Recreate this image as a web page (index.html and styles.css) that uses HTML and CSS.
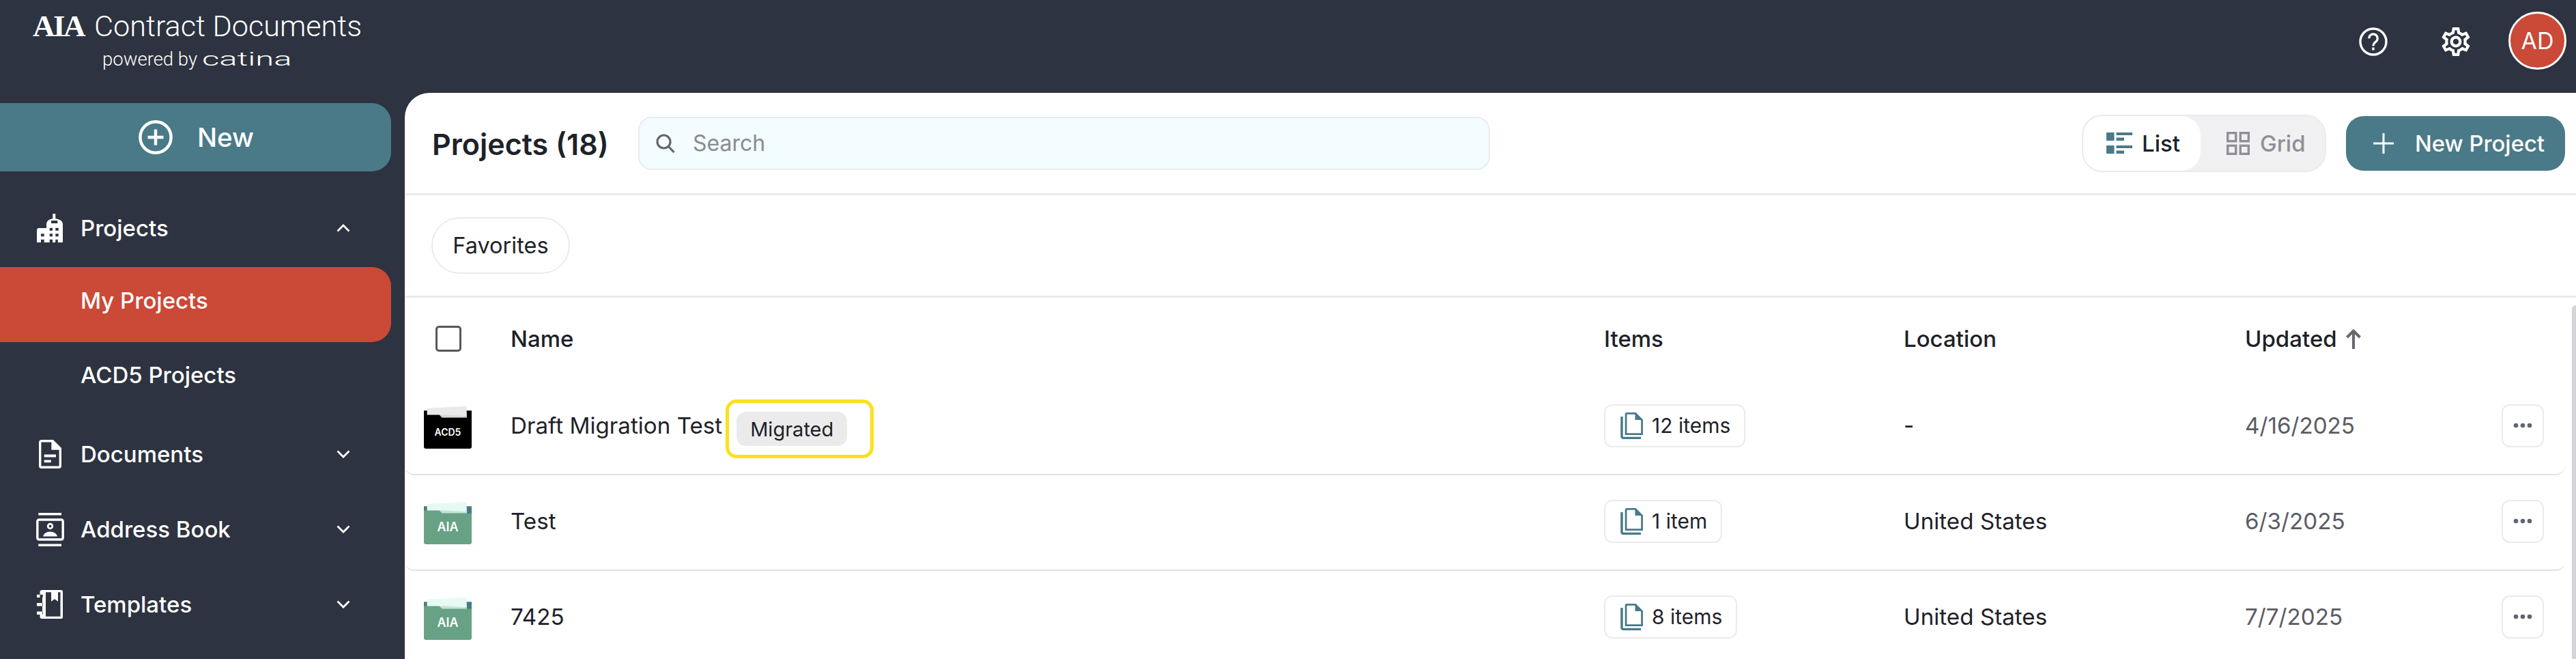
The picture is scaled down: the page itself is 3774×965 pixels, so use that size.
FILE: index.html
```html
<!DOCTYPE html>
<html lang="en">
<head>
<meta charset="utf-8">
<title>Projects</title>
<link rel="stylesheet" href="styles.css">
</head>
<body>
<div class="app">
  <header class="topbar">
    <div class="logo">
      <div class="logo-main"><span class="logo-aia">AIA</span><span class="logo-name">Contract Documents</span></div>
      <div class="logo-sub"><span class="logo-powered">powered by</span><span class="logo-catina">catina</span></div>
    </div>
    <div class="top-actions">
      <svg class="ico-help" viewBox="0 0 42 42" fill="none" stroke="#fff" stroke-width="3.4"><circle cx="21" cy="21" r="19"/><path d="M14.8 16.2a6.2 6.2 0 1 1 10 4.8c-2.6 2-3.8 3.2-3.8 6.2" stroke-width="3.2"/><path d="M21 29.5v4" stroke-width="3.4"/></svg>
      <svg class="ico-gear" viewBox="2 2 20 20" fill="#fff"><path d="M19.43 12.98c.04-.32.07-.64.07-.98 0-.34-.03-.66-.07-.98l2.11-1.65c.19-.15.24-.42.12-.64l-2-3.46c-.09-.16-.26-.25-.44-.25-.06 0-.12.01-.17.03l-2.49 1c-.52-.4-1.08-.73-1.69-.98l-.38-2.65C14.46 2.18 14.25 2 14 2h-4c-.25 0-.46.18-.49.42l-.38 2.65c-.61.25-1.17.59-1.69.98l-2.49-1c-.06-.02-.12-.03-.18-.03-.17 0-.34.09-.43.25l-2 3.46c-.13.22-.07.49.12.64l2.11 1.65c-.04.32-.07.65-.07.98 0 .33.03.66.07.98l-2.11 1.65c-.19.15-.24.42-.12.64l2 3.46c.09.16.26.25.44.25.06 0 .12-.01.17-.03l2.49-1c.52.4 1.08.73 1.69.98l.38 2.65c.03.24.24.42.49.42h4c.25 0 .46-.18.49-.42l.38-2.65c.61-.25 1.17-.59 1.69-.98l2.49 1c.06.02.12.03.18.03.17 0 .34-.09.43-.25l2-3.46c.12-.22.07-.49-.12-.64l-2.11-1.65zm-1.98-1.71c.04.31.05.52.05.73 0 .21-.02.43-.05.73l-.14 1.13.89.7 1.08.84-.7 1.21-1.27-.51-1.04-.42-.9.68c-.43.32-.84.56-1.25.73l-1.06.43-.16 1.13-.2 1.35h-1.4l-.19-1.35-.16-1.13-1.06-.43c-.43-.18-.83-.41-1.23-.71l-.91-.7-1.06.43-1.27.51-.7-1.21 1.08-.84.89-.7-.14-1.13c-.03-.31-.05-.54-.05-.74s.02-.43.05-.73l.14-1.13-.89-.7-1.08-.84.7-1.21 1.27.51 1.04.42.9-.68c.43-.32.84-.56 1.25-.73l1.06-.43.16-1.13.2-1.35h1.39l.19 1.35.16 1.13 1.06.43c.43.18.83.41 1.23.71l.91.7 1.06-.43 1.27-.51.7 1.21-1.07.85-.89.7.14 1.13zM12 8c-2.21 0-4 1.79-4 4s1.79 4 4 4 4-1.79 4-4-1.79-4-4-4zm0 6c-1.1 0-2-.9-2-2s.9-2 2-2 2 .9 2 2-.9 2-2 2z"/></svg>
      <div class="avatar">AD</div>
    </div>
  </header>
  <div class="body">
    <aside class="sidebar">
      <button class="new-btn">
        <svg class="ico-newplus" viewBox="0 0 50 50" fill="none" stroke="#fff" stroke-width="4.4"><ellipse cx="25" cy="25" rx="22.6" ry="22.8"/><path d="M13.5 25h23M25 13.5v23"/></svg>
        <span>New</span>
      </button>
      <nav class="nav">
        <div class="nav-item">
          <span class="nav-ico"><svg width="38" height="42" viewBox="0 0 38 42" fill="#fff"><path fill-rule="evenodd" d="M0 24q0-3 3-3h11v-6q0-6 9.300-8V0h4v7q10.700 2 10.700 8v27H30.800v-4.300h-3.600V42H23v-4.300h-4.300V42H10.700v-4.300H6V42H0zM21 10v4h9.300v-4zM18.700 20.700v4H23v-4zM27.300 20.700v4h4.400v-4zM18.700 29.300v4H23v-4zM27.300 29.300v4h4.400v-4zM6 29.300v4h4.700v-4z"/></svg></span>
          <span class="nav-label">Projects</span>
          <svg class="chev" viewBox="0 0 20 12" fill="none" stroke="#fff" stroke-width="2.8"><path d="M1.500 10.500 10 2l8.500 8.500"/></svg>
        </div>
        <div class="nav-item nav-active"><span class="nav-ico"></span><span class="nav-label">My Projects</span></div>
        <div class="nav-item nav-sub"><span class="nav-ico"></span><span class="nav-label">ACD5 Projects</span></div>
        <div class="nav-item nav-gap">
          <span class="nav-ico"><svg width="33" height="42" viewBox="0 0 33 42" fill="none" stroke="#fff" stroke-width="3.4"><path d="M3.700 1.700H20L31.300 13v25.300a2 2 0 0 1-2 2H3.700a2 2 0 0 1-2-2V3.700a2 2 0 0 1 2-2z" stroke-linejoin="round"/><path d="M20 1.700 31.300 13H20z" fill="#fff"/><path d="M7.700 23.500H25M7.700 31.300h10" stroke-width="3.800"/></svg></span>
          <span class="nav-label">Documents</span>
          <svg class="chev" viewBox="0 0 20 12" fill="none" stroke="#fff" stroke-width="2.8"><path d="M1.500 1.500 10 10l8.500-8.500"/></svg>
        </div>
        <div class="nav-item">
          <span class="nav-ico"><svg width="41" height="49" viewBox="0 0 41 49" fill="none" stroke="#fff" stroke-width="3.500"><path d="M3.300 1.800H37M3.300 47.200H37"/><rect x="1.800" y="10" width="37.400" height="29" rx="2.500"/><circle cx="20.500" cy="19.500" r="3.300" stroke-width="2.800"/><path d="M10 34.500c1-4 5-7 10.500-7s9.500 3 10.500 7z" fill="#fff" stroke="none"/></svg></span>
          <span class="nav-label">Address Book</span>
          <svg class="chev" viewBox="0 0 20 12" fill="none" stroke="#fff" stroke-width="2.8"><path d="M1.500 1.500 10 10l8.500-8.500"/></svg>
        </div>
        <div class="nav-item">
          <span class="nav-ico"><svg width="38" height="42" viewBox="0 0 38 42" fill="#fff"><path fill-rule="evenodd" d="M7.500 0H35.500a2.500 2.500 0 0 1 2.500 2.500V39.500a2.500 2.500 0 0 1-2.500 2.500H7.500a3 3 0 0 1-3-3V36H0V31.500h8.700v4.200H8V38.700H34.500V3.200H13V38.700H8V23.500H0V19H8.700V23.500H8V11H0V6.700H8.700V11H4.500V3a3 3 0 0 1 3-3z"/><path d="M21 3h10v13.700l-5-3.400-5 3.400z"/></svg></span>
          <span class="nav-label">Templates</span>
          <svg class="chev" viewBox="0 0 20 12" fill="none" stroke="#fff" stroke-width="2.8"><path d="M1.500 1.500 10 10l8.500-8.500"/></svg>
        </div>
      </nav>
    </aside>
    <main class="main">
      <div class="head">
        <h1 class="title">Projects (18)</h1>
        <div class="search">
          <svg class="ico-search" viewBox="0 0 28 28" fill="none" stroke="#65666d" stroke-width="3.200"><circle cx="11.500" cy="11.500" r="9.500"/><path d="m18.500 18.500 8 8.500"/></svg>
          <span>Search</span>
        </div>
        <div class="toggle">
          <div class="tg tg-on">
            <svg width="38" height="31" viewBox="0 0 38 31" fill="#4a7a88"><path d="M0 0h11.500v12H0zM0 19h11.500v12H0zM14.500 0H38v4H14.500zM14.500 7.500H26v4.500H14.500zM14.500 19H38v4H14.500zM14.500 26.500H26V31H14.500z"/></svg>
            <span>List</span>
          </div>
          <div class="tg tg-off">
            <svg width="34" height="34" viewBox="0 0 34 34" fill="none" stroke="#8f8f97" stroke-width="3.400"><rect x="1.700" y="1.700" width="12" height="12"/><rect x="20.300" y="1.700" width="12" height="12"/><rect x="1.700" y="20.300" width="12" height="12"/><rect x="20.300" y="20.300" width="12" height="12"/></svg>
            <span>Grid</span>
          </div>
        </div>
        <button class="new-project">
          <svg width="30" height="30" viewBox="0 0 30 30" fill="none" stroke="#fff" stroke-width="3"><path d="M0 15h30M15 0v30"/></svg>
          <span>New Project</span>
        </button>
      </div>
      <div class="filters"><div class="chip-fav">Favorites</div></div>
      <div class="table">
        <div class="row row-head">
          <div class="cell-ico"><span class="checkbox"></span></div>
          <div>Name</div>
          <div>Items</div>
          <div>Location</div>
          <div class="updated">Updated
            <svg width="24" height="29" viewBox="0 0 24 29" fill="none" stroke="#66686e" stroke-width="4"><path d="M12 3v26M2.500 12 12 2.500l9.500 9.500"/></svg>
          </div>
          <div></div>
        </div>
        <div class="row">
          <div class="cell-ico">
            <svg class="folder" viewBox="0 0 70 62"><path fill="#000" d="M0 6.300h70V20H0z"/><path fill="#e9e9e9" d="M4.700 2.700 62.300 0 63 14.500H4.700z"/><path fill="#d9d9d9" d="M24 12l39 2.300v2.400H26z"/><path fill="#000" d="M0 12.500h23l3 4.200h44V59a3 3 0 0 1-3 3H3a3 3 0 0 1-3-3z"/><text class="folder-acd" x="35" y="43.300">ACD5</text></svg>
          </div>
          <div class="cell-name">
            <span>Draft Migration Test</span>
            <span class="mark"><span class="badge">Migrated</span></span>
          </div>
          <div><span class="items"><svg class="ico-doc" viewBox="0 0 33 39" fill="none" stroke="#4a7a88" stroke-width="2.800"><path d="M2 6v29a2.500 2.500 0 0 0 2.500 2.500H30" stroke-width="3.500"/><path d="M9.500 1.400H22L31.600 11v20.600H8.100V2.800a1.400 1.400 0 0 1 1.400-1.400z"/><path d="M21.500 1.400 31.600 11H21.500z" fill="#4a7a88" stroke="none"/></svg>12 items</span></div>
          <div>-</div>
          <div class="date">4/16/2025</div>
          <div class="more"><svg width="28" height="8" viewBox="0 0 28 8" fill="#5f6470"><circle cx="4" cy="4" r="3.300"/><circle cx="14" cy="4" r="3.300"/><circle cx="24" cy="4" r="3.300"/></svg></div>
        </div>
        <div class="row">
          <div class="cell-ico">
            <svg class="folder" viewBox="0 0 70 62"><path fill="#4a7a88" d="M0 6.300h70V20H0z"/><path fill="#e6faf4" d="M4.700 2.700 62.300 0 63 14.500H4.700z"/><path fill="#c5e3d6" d="M24 12l39 2.300v2.400H26z"/><path fill="#67a285" d="M0 12.500h23l3 4.200h44V59a3 3 0 0 1-3 3H3a3 3 0 0 1-3-3z"/><text class="folder-aia" x="35" y="43.300">AIA</text></svg>
          </div>
          <div class="cell-name"><span>Test</span></div>
          <div><span class="items"><svg class="ico-doc" viewBox="0 0 33 39" fill="none" stroke="#4a7a88" stroke-width="2.800"><path d="M2 6v29a2.500 2.500 0 0 0 2.500 2.500H30" stroke-width="3.500"/><path d="M9.500 1.400H22L31.600 11v20.600H8.100V2.800a1.400 1.400 0 0 1 1.400-1.400z"/><path d="M21.500 1.400 31.600 11H21.500z" fill="#4a7a88" stroke="none"/></svg>1 item</span></div>
          <div>United States</div>
          <div class="date">6/3/2025</div>
          <div class="more"><svg width="28" height="8" viewBox="0 0 28 8" fill="#5f6470"><circle cx="4" cy="4" r="3.300"/><circle cx="14" cy="4" r="3.300"/><circle cx="24" cy="4" r="3.300"/></svg></div>
        </div>
        <div class="row">
          <div class="cell-ico">
            <svg class="folder" viewBox="0 0 70 62"><path fill="#4a7a88" d="M0 6.300h70V20H0z"/><path fill="#e6faf4" d="M4.700 2.700 62.300 0 63 14.500H4.700z"/><path fill="#c5e3d6" d="M24 12l39 2.300v2.400H26z"/><path fill="#67a285" d="M0 12.500h23l3 4.200h44V59a3 3 0 0 1-3 3H3a3 3 0 0 1-3-3z"/><text class="folder-aia" x="35" y="43.300">AIA</text></svg>
          </div>
          <div class="cell-name"><span>7425</span></div>
          <div><span class="items"><svg class="ico-doc" viewBox="0 0 33 39" fill="none" stroke="#4a7a88" stroke-width="2.800"><path d="M2 6v29a2.500 2.500 0 0 0 2.500 2.500H30" stroke-width="3.500"/><path d="M9.500 1.400H22L31.600 11v20.600H8.100V2.800a1.400 1.400 0 0 1 1.400-1.400z"/><path d="M21.500 1.400 31.600 11H21.500z" fill="#4a7a88" stroke="none"/></svg>8 items</span></div>
          <div>United States</div>
          <div class="date">7/7/2025</div>
          <div class="more"><svg width="28" height="8" viewBox="0 0 28 8" fill="#5f6470"><circle cx="4" cy="4" r="3.300"/><circle cx="14" cy="4" r="3.300"/><circle cx="24" cy="4" r="3.300"/></svg></div>
        </div>
      </div>
      <div class="scrollbar"></div>
    </main>
  </div>
</div>
</body>
</html>
```

FILE: styles.css
```css
* { box-sizing: border-box; }
html, body { margin: 0; height: 100%; }
body {
  background: #2d3340;
  font-family: Inter, "Liberation Sans", sans-serif;
  color: #1e2228;
  overflow: hidden;
}
.app { width: 3774px; height: 965px; display: flex; flex-direction: column; overflow: hidden; }

/* top bar */
.topbar { height: 136px; flex: none; display: flex; align-items: flex-start; justify-content: space-between; color: #fff; }
.logo { padding: 12px 0 0 48px; display: flex; flex-direction: column; }
.logo-main { display: flex; align-items: baseline; height: 52px; }
.logo-aia { font-family: "Liberation Serif", serif; font-weight: 700; font-size: 45px; line-height: 52px; letter-spacing: -2.500px; width: 90px; }
.logo-name { font-family: Roboto, sans-serif; font-weight: 300; font-size: 43.200px; line-height: 52px; }
.logo-sub { display: flex; align-items: baseline; padding-left: 102px; height: 40px; margin-top: 3px; }
.logo-powered { font-family: Roboto, sans-serif; font-weight: 300; font-size: 27.500px; line-height: 40px; width: 146px; }
.logo-catina { font-family: Roboto, sans-serif; font-weight: 300; font-size: 28px; line-height: 40px; display: inline-block; transform: scaleX(1.75); transform-origin: left center; }
.top-actions { display: flex; align-items: center; padding: 18px 14px 0 0; height: 103px; }
.ico-help { width: 42px; height: 42px; margin-right: 79px; }
.ico-gear { width: 42px; height: 42px; margin-right: 56px; }
.avatar { width: 85px; height: 85px; border-radius: 50%; background: #cb4937; border: 3px solid #fff; display: flex; align-items: center; justify-content: center; font-size: 34px; color: #fff; margin-top: -2px; }

.body { flex: 1; display: flex; min-height: 0; }

/* sidebar */
.sidebar { width: 593px; flex: none; padding-top: 15px; color: #fff; }
.new-btn { width: 573px; height: 100px; border: 0; border-radius: 0 28px 28px 0; background: #4a7a88; color: #fff; display: flex; align-items: center; justify-content: center; gap: 36px; font: 500 38.500px Inter, sans-serif; padding: 0 0 0 2px; }
.ico-newplus { width: 50px; height: 50px; }
.nav { margin-top: 28px; display: flex; flex-direction: column; }
.nav-item { width: 573px; height: 110px; display: flex; align-items: center; padding: 0 58px 0 46px; font-size: 33px; font-weight: 500; flex: none; }
.nav-ico { width: 54px; height: 50px; margin-right: 18px; display: flex; align-items: center; justify-content: center; flex: none; }
.nav-label { flex: 1; }
.chev { width: 20px; height: 12px; flex: none; margin-right: 2px; }
.nav-active { background: #cb4937; border-radius: 0 28px 28px 0; margin-top: 2px; padding-bottom: 12px; }
.nav-sub { height: 96px; }
.nav-gap { margin-top: 13px; }

/* main */
.main { flex: 1; background: #fff; border-top-left-radius: 36px; position: relative; display: flex; flex-direction: column; min-width: 0; }
.head { height: 150px; flex: none; border-bottom: 3px solid #ebebeb; display: flex; align-items: center; padding: 0 16px 0 40px; }
.title { margin: 2px 43px 0 0; font-size: 43px; font-weight: 600; color: #1e2228; width: 259px; white-space: nowrap; }
.search { width: 1248px; height: 78px; background: #f3fcfe; border: 2.500px solid #e9eced; border-radius: 20px; display: flex; align-items: center; padding-left: 24px; gap: 26px; font-size: 32px; color: #8a8b92; }
.ico-search { width: 28px; height: 28px; flex: none; }
.toggle { margin-left: auto; width: 358px; height: 84px; border: 2.500px solid #ebebeb; border-radius: 30px; background: #f1f1f3; display: flex; font-size: 33px; font-weight: 500; }
.tg { display: flex; align-items: center; height: 100%; }
.tg-on { width: 172px; background: #fff; border-radius: 28px; padding-left: 34px; gap: 14px; color: #1e2228; }
.tg-off { padding-left: 38px; gap: 15px; color: #8f8f97; }
.new-project { margin-left: 29px; width: 321px; height: 80px; border: 0; border-radius: 26px; background: #4a7a88; color: #fff; display: flex; align-items: center; padding-left: 40px; gap: 31px; font: 500 32.800px Inter, sans-serif; }
.filters { height: 150px; flex: none; border-bottom: 3px solid #ebebeb; display: flex; align-items: center; padding-left: 39px; }
.chip-fav { width: 203px; height: 83px; border: 2.500px solid #ebebeb; border-radius: 42px; display: flex; align-items: center; justify-content: center; font-size: 32.500px; }

/* table */
.table { width: 3165px; flex: none; }
.row { display: grid; grid-template-columns: 155px 1602px 439px 500px 376px 62px 31px; align-items: center; height: 140px; padding-bottom: 4px; border-bottom: 2.500px solid #e2e2e2; border-radius: 0 0 14px 14px; font-size: 33.200px; }
.row-head { height: 120px; border-bottom: 0; padding-bottom: 0; font-weight: 500; font-size: 33px; }
.cell-ico { padding: 6px 0 0 28px; display: flex; align-items: center; }
.row-head .cell-ico { padding: 0 0 0 45px; }
.checkbox { width: 38px; height: 38px; border: 3.500px solid #55585e; border-radius: 5px; background: #fff; }
.folder { width: 70px; height: 62px; }
.folder-acd, .folder-aia { fill: #fff; text-anchor: middle; font-family: Inter, sans-serif; font-weight: 600; }
.folder-acd { font-size: 14px; }
.folder-aia { font-size: 18px; }
.cell-name { display: flex; align-items: center; }
.mark { margin: 10px 0 0 5px; width: 217px; height: 86px; border: 5px solid #fde01a; border-radius: 16px; display: flex; align-items: center; padding-left: 11px; }
.badge { width: 162px; height: 50px; background: #ebebeb; border-radius: 14px; display: flex; align-items: center; justify-content: center; font-size: 29px; }
.items { display: inline-flex; align-items: center; height: 63px; border: 2.500px solid #ebebeb; border-radius: 12px; padding: 0 20px 0 22px; gap: 13px; font-size: 30px; }
.ico-doc { width: 33px; height: 39px; flex: none; }
.date { color: #5b5c64; }
.updated { display: flex; align-items: center; gap: 12px; }
.more { width: 62px; height: 63px; border: 2.500px solid #ebebeb; border-radius: 12px; display: flex; align-items: center; justify-content: center; }
.scrollbar { position: absolute; top: 311px; right: 0; bottom: 0; width: 6px; background: #d4d4d8; border-top-left-radius: 6px; }
```
